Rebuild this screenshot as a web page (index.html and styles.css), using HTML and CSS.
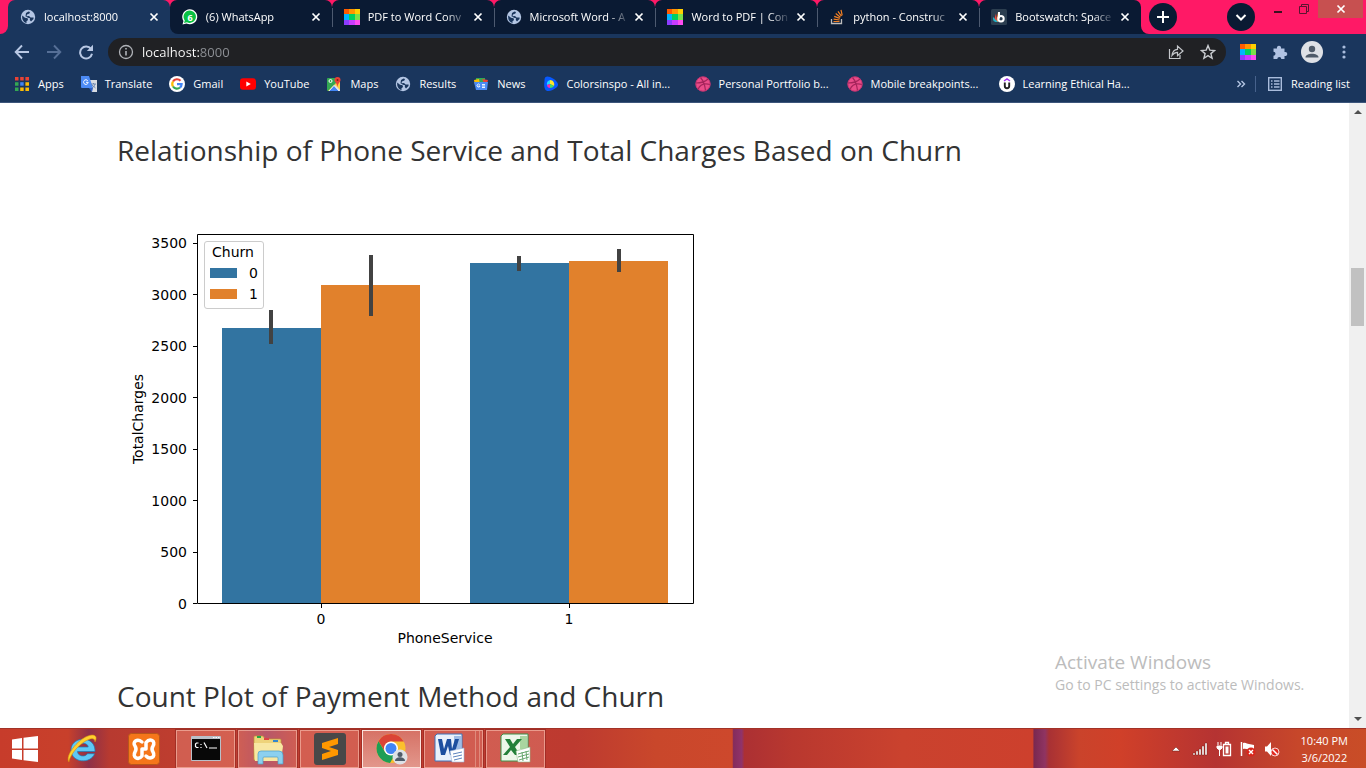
FILE: index.html
```html
<!DOCTYPE html>
<html lang="en">
<head>
<meta charset="utf-8">
<title>localhost:8000</title>
<link rel="stylesheet" href="styles.css">
</head>
<body>
<svg class="defs" aria-hidden="true">
  <symbol id="globe" viewBox="0 0 16 16"><circle cx="8" cy="8" r="7.200" fill="#b4c6e4"/><path d="M2.200 6.500 5 8.800l2.600.4.4 1.800-1.600 1.400.2 1.600C3.600 13.300 1.800 10.800 2.200 6.500zM6 4 8.500 2.500l1.500.6-.6 1.400L7 5.500l-.5 1.700L9 7l1.600 1.600 3-.1-.1 1.500-2.500 2.500-1.200-1.500.2-1.800-2-.4-2.500-1.600z" fill="#1a365d"/></symbol>
  <symbol id="rainbow" viewBox="0 0 16 16"><path fill="#ff5a00" d="M0 0h6v6H0z"/><path fill="#ff9500" d="M5 0h6v6H5z"/><path fill="#ffcf00" d="M11 0h5v6h-5z"/><path fill="#00b4ff" d="M0 5h5v6H0z"/><path fill="#00d060" d="M5 5h6v6H5z"/><path fill="#7be04a" d="M11 5h5v6h-5z"/><path fill="#8c3cff" d="M0 11h5v5H0z"/><path fill="#c93cff" d="M5 11h6v5H5z"/><path fill="#ff4cf0" d="M11 11h5v5h-5z"/></symbol>
  <symbol id="close" viewBox="0 0 16 16"><path d="m4.500 4.500 7 7m0-7-7 7" stroke="#fff" stroke-width="1.700"/></symbol>
  <symbol id="dribbble" viewBox="0 0 16 16"><circle cx="8" cy="8" r="7.500" fill="#ea4c89"/><path d="M1 7c5 0 9-1 12-4M5.500 1.500c3 3.500 4.500 8 5 13M3 13.500c2-5 6-6.500 12-5" fill="none" stroke="#a5245b" stroke-width="1.200"/><circle cx="8" cy="8" r="7.200" fill="none" stroke="#b52d68" stroke-width=".8"/></symbol>
</svg>

<header class="browser">
  <div class="tabstrip">
    <span class="edge"></span>
    <nav class="tabs" aria-label="Tabs">
      <div class="tab active"><svg class="i16"><use href="#globe"/></svg><span class="title">localhost:8000</span><button class="x" aria-label="Close tab"><svg class="i16"><use href="#close"/></svg></button></div>
      <div class="tab first"><svg class="i16" viewBox="0 0 16 16"><path d="M.5 15.500 1.500 12A7.500 7.500 0 1 1 4.500 14.600z" fill="#fff"/><path d="m2 14 .8-2.500A6.200 6.200 0 1 1 5 13.300z" fill="#09c143"/><text x="8" y="11.500" text-anchor="middle" class="badge6">6</text></svg><span class="title">(6) WhatsApp</span><button class="x" aria-label="Close tab"><svg class="i16"><use href="#close"/></svg></button></div>
      <div class="tab"><svg class="i16"><use href="#rainbow"/></svg><span class="title">PDF to Word Conv</span><button class="x" aria-label="Close tab"><svg class="i16"><use href="#close"/></svg></button></div>
      <div class="tab"><svg class="i16"><use href="#globe"/></svg><span class="title">Microsoft Word - A</span><button class="x" aria-label="Close tab"><svg class="i16"><use href="#close"/></svg></button></div>
      <div class="tab"><svg class="i16"><use href="#rainbow"/></svg><span class="title">Word to PDF | Con</span><button class="x" aria-label="Close tab"><svg class="i16"><use href="#close"/></svg></button></div>
      <div class="tab"><svg class="i16" viewBox="0 0 16 16"><path d="M2.500 10v4.500h10V10" fill="none" stroke="#bcbbbb" stroke-width="1.300"/><path d="M4.500 12.500h6M4.600 10.200l6 .8M5.200 7.400l5.600 2M6.700 4.600l4.700 3.600M9 2.300l3.400 4.800M12 .8l1.200 5.600" stroke="#f48024" stroke-width="1.200"/></svg><span class="title">python - Construc</span><button class="x" aria-label="Close tab"><svg class="i16"><use href="#close"/></svg></button></div>
      <div class="tab"><svg class="i16" viewBox="0 0 16 16"><rect width="16" height="16" rx="1.500" fill="#2c3e50"/><path d="M7 3v10H5z" fill="#f58a3c"/><path d="M5 4.500 6 13l-3-2z" fill="#e8473f"/><path d="M2 8l5 5H4.500A3 3 0 0 1 2 10z" fill="#20b2c8"/><path d="M8 3v6.500" stroke="#fff" stroke-width="2"/><circle cx="10" cy="9.700" r="2.700" fill="none" stroke="#fff" stroke-width="2"/></svg><span class="title">Bootswatch: Space</span><button class="x" aria-label="Close tab"><svg class="i16"><use href="#close"/></svg></button></div>
    </nav>
    <div class="strip-end">
      <button class="round" aria-label="New tab"><svg class="i16" viewBox="0 0 16 16"><path d="M8 2v12M2 8h12" stroke="#fff" stroke-width="2"/></svg></button>
      <button class="round search" aria-label="Search tabs"><svg class="i16" viewBox="0 0 16 16"><path d="m3.500 6 4.500 4.500L12.500 6" fill="none" stroke="#fff" stroke-width="2"/></svg></button>
      <div class="wincontrols">
        <button aria-label="Minimize"><svg width="10" height="10"><path d="M1 8h8" stroke="#3a1020" stroke-width="2"/></svg></button>
        <button aria-label="Restore"><svg width="10" height="10"><path d="M.5 2.500h7v7h-7zM2.500 2V.5h7v7H8" fill="none" stroke="#5a1530"/></svg></button>
        <button class="winclose" aria-label="Close"><svg width="10" height="10"><path d="m1.500 1.500 7 7m0-7-7 7" stroke="#fff" stroke-width="1.700"/></svg></button>
      </div>
    </div>
  </div>

  <div class="toolbar">
    <button aria-label="Back"><svg class="i16" viewBox="0 0 16 16"><path d="M15 8H2M8 1.500 1.700 8 8 14.500" fill="none" stroke="#b8c8e4" stroke-width="1.900"/></svg></button>
    <button aria-label="Forward"><svg class="i16" viewBox="0 0 16 16"><path d="M1 8h13M8 1.500 14.300 8 8 14.500" fill="none" stroke="#566f96" stroke-width="1.900"/></svg></button>
    <button aria-label="Reload"><svg class="i16" viewBox="0 0 16 16"><path d="M13 5A6 6 0 1 0 14 9.800" fill="none" stroke="#b8c8e4" stroke-width="2"/><path d="M15 .8V7H8.800z" fill="#b8c8e4"/></svg></button>
    <div class="omnibox">
      <svg class="i16" viewBox="0 0 16 16"><circle cx="8" cy="8" r="6.500" fill="none" stroke="#b0b3b8" stroke-width="1.300"/><path d="M8 7v4.500M8 4v1.600" stroke="#b0b3b8" stroke-width="1.600"/></svg>
      <input type="text" value="localhost:8000" aria-label="Address">
      <button aria-label="Share"><svg class="i16" viewBox="0 0 16 16"><path d="M1.500 5v9.500H12V11" fill="none" stroke="#c4c7cb" stroke-width="1.200"/><path d="M4 11.500C4.500 7.500 6.500 5.500 9.500 5.300V2l5.500 5-5.500 4.600V8.300C7 8.300 5.500 9.500 4 11.500z" fill="none" stroke="#c4c7cb" stroke-width="1.200"/></svg></button>
      <button aria-label="Bookmark"><svg class="i16" viewBox="0 0 16 16"><path d="m8 1.600 1.800 4.500 4.800.4-3.700 3.100 1.200 4.700L8 11.700l-4.100 2.600 1.200-4.700L1.400 6.500l4.800-.4z" fill="none" stroke="#c9ccd0" stroke-width="1.400"/></svg></button>
    </div>
    <button aria-label="Extension"><svg class="i16"><use href="#rainbow"/></svg></button>
    <button aria-label="Extensions"><svg class="i16" viewBox="0 0 16 16"><path d="M1.500 4.500H5a2.100 2.100 0 1 1 4 0h3.500V8a2.100 2.100 0 1 1 0 4v3H9.300a2 2 0 0 0-4 0H1.500v-3.300a2 2 0 0 0 0-4z" fill="#b0c2e2"/></svg></button>
    <button aria-label="Profile"><svg width="22" height="22" viewBox="0 0 22 22"><circle cx="11" cy="11" r="11" fill="#dee1e6"/><circle cx="11" cy="8" r="3.200" fill="#4f5b69"/><path d="M4.500 16.500c0-5 13-5 13 0z" fill="#4f5b69"/></svg></button>
    <button aria-label="Menu"><svg class="i16" viewBox="0 0 16 16"><g fill="#a9bcdc"><circle cx="8" cy="3" r="1.600"/><circle cx="8" cy="8" r="1.600"/><circle cx="8" cy="13" r="1.600"/></g></svg></button>
  </div>

  <nav class="bookmarks" aria-label="Bookmarks">
    <a href="#"><svg class="i16" viewBox="0 0 16 16"><path d="M1 1h3.500v3.500H1zM6.200 1h3.500v3.500H6.200zM11.400 1H15v3.500h-3.600z" fill="#ea4335"/><path d="M1 6.200h3.500v3.500H1zM1 11.400h3.500V15H1z" fill="#34a853"/><path d="M6.200 6.200h3.500v3.500H6.200z" fill="#4285f4"/><path d="M11.400 6.200H15v3.500h-3.600zM6.200 11.400h3.500V15H6.200zM11.400 11.400H15V15h-3.600z" fill="#fbbc05"/></svg>Apps</a>
    <a href="#"><svg class="i16" viewBox="0 0 16 16"><path d="M7 4h9v12h-5z" fill="#d9dce2"/><path d="M0 0h8l4 12H1q-1 0-1-1z" fill="#4c8bf5"/><path d="m8 12 3 4 1-4z" fill="#2f5fc4"/><path d="M6.800 4.800A2.300 2.300 0 1 0 7.200 6.300H5" fill="none" stroke="#fff"/><path d="M10 8h5m-2.500-1v1m1.500 0c-.5 2-1.500 3.500-3 4m0-3 3.500 3" fill="none" stroke="#5a78a8" stroke-width=".8"/></svg>Translate</a>
    <a href="#"><svg class="i16" viewBox="0 0 16 16"><circle cx="8" cy="8" r="8" fill="#fff"/><g fill="none" stroke-width="2.200"><path d="M4 5.500A4.700 4.700 0 0 1 11.500 4.800" stroke="#ea4335"/><path d="M4 5.500a4.700 4.700 0 0 0 0 5" stroke="#fbbc05"/><path d="M4 10.500a4.700 4.700 0 0 0 7 1" stroke="#34a853"/><path d="M11 11.500A4.500 4.500 0 0 0 12.600 8.200H8" stroke="#4285f4"/></g></svg>Gmail</a>
    <a href="#"><svg class="i16" viewBox="0 0 16 16"><rect y="2.300" width="16" height="11.500" rx="3" fill="#f00"/><path d="m6.300 5.500 4.500 2.500-4.500 2.500z" fill="#fff"/></svg>YouTube</a>
    <a href="#"><svg class="i16" viewBox="0 0 16 16"><rect x="1" y="2" width="13" height="13" rx="1" fill="#34a853"/><path d="M2 15 13 4l1 1v10z" fill="#fbd04a"/><path d="m9 9 5 5v1h-1L8 10z" fill="#dfe3ea"/><path d="m3 15 5-5.500 5 5.500z" fill="#4285f4"/><path d="m3 15 5-5.500 5 5.500" fill="none" stroke="#e8ecf2"/><circle cx="4.500" cy="5" r="1.500" fill="none" stroke="#fff"/><path d="M8.500 4a3 3 0 0 1 6 0c0 2-2.500 3-3 7-.5-4-3-5-3-7z" fill="#ea4335"/><circle cx="11.500" cy="4" r="1" fill="#8b1c13"/></svg>Maps</a>
    <a href="#"><svg class="i16"><use href="#globe"/></svg>Results</a>
    <a href="#"><svg class="i16" viewBox="0 0 16 16"><path d="m3 2 9 0v6H3z" fill="#34a853"/><path d="m1 4 5-1 1 5-5 1z" fill="#fbbc05"/><path d="m9 3 6 1-2 7z" fill="#ea4335"/><path d="M1 6h14l-1 8H3z" fill="#4c8bf5"/><path d="M6.700 8.600A1.500 1.500 0 1 0 7 10H5.500M9 8.500h3M9 10h3m-3 1.500h3" fill="none" stroke="#fff" stroke-width=".9"/></svg>News</a>
    <a class="long" href="#"><svg class="i16" viewBox="0 0 16 16"><path d="M1.500 4C1.500-.8 6 0 10 2.500S17 8.500 13.500 11.500 3.500 17 2 13 1.500 8 1.500 4z" fill="#0759ff"/><path d="M7 4a4 4 0 0 0-3 5l3-1z" fill="#26d9ff"/><path d="M7 4v4l4 2c1-3-1-6-4-6z" fill="#ffe62b"/><path d="M4 9c0 2 1.500 3 3 3V8z" fill="#ff28ad"/><path d="M7 8v4c2 0 3-.8 4-2z" fill="#46dc65"/></svg>Colorsinspo - All in...</a>
    <a class="long" href="#"><svg class="i16"><use href="#dribbble"/></svg>Personal Portfolio b...</a>
    <a class="long" href="#"><svg class="i16"><use href="#dribbble"/></svg>Mobile breakpoints...</a>
    <a class="long" href="#"><svg class="i16" viewBox="0 0 16 16"><circle cx="8" cy="8" r="8" fill="#fff"/><path d="m5 5 3-2 3 2" fill="none" stroke="#a435f0" stroke-width="1.500"/><path d="M5.800 6.500V10a2.200 2.200 0 0 0 4.400 0V6.500" fill="none" stroke="#222" stroke-width="1.900"/></svg>Learning Ethical Ha...</a>
    <button class="more" aria-label="More bookmarks"><svg class="i16" viewBox="0 0 16 16"><path d="m4.500 5 3 3-3 3m4-6 3 3-3 3" fill="none" stroke="#b4c6e4" stroke-width="1.400"/></svg></button>
    <a class="reading" href="#"><svg class="i16" viewBox="0 0 16 16"><rect x="1.700" y="1.700" width="12.600" height="12.600" fill="none" stroke="#a9bcdc" stroke-width="1.400"/><path d="M4 5h1.500M7 5h5.500M4 8h1.500M7 8h5.500M4 11h1.500M7 11h5.500" stroke="#a9bcdc" stroke-width="1.500"/></svg>Reading list</a>
  </nav>
</header>

<div class="viewport">
  <main>
    <h3>Relationship of Phone Service and Total Charges Based on Churn</h3>
    <svg class="chart" viewBox="0 0 640 480" role="img" aria-label="TotalCharges by PhoneService and Churn">
      <g fill="#3274a1"><path d="M105 151h99v275h-99z"/><path d="M353 86h99v340h-99z"/></g>
      <g fill="#e1812c"><path d="M204 108h99v318h-99z"/><path d="M452 84h99v342h-99z"/></g>
      <path d="M154 133v34M254 78v61M402 79v15M502 72v23" stroke="#424242" stroke-width="4"/>
      <path d="M80.500 57.500h496v369h-496zM76 426.500h4M76 375.500h4M76 323.500h4M76 272.500h4M76 220.500h4M76 169.500h4M76 117.500h4M76 66.500h4M204.500 427v4M452.500 427v4" fill="none" stroke="#000"/>
      <g text-anchor="end"><text x="70" y="432">0</text><text x="70" y="380">500</text><text x="70" y="329">1000</text><text x="70" y="277">1500</text><text x="70" y="226">2000</text><text x="70" y="174">2500</text><text x="70" y="123">3000</text><text x="70" y="71">3500</text></g>
      <g text-anchor="middle"><text x="204" y="447">0</text><text x="452" y="447">1</text><text x="328" y="466">PhoneService</text><text transform="translate(26 242) rotate(-90)">TotalCharges</text></g>
      <rect x="87.500" y="64.500" width="59" height="67" rx="2.500" fill="#fff" fill-opacity=".8" stroke="#ccc"/>
      <path d="M93 91h27v10H93z" fill="#3274a1"/><path d="M93 112h27v10H93z" fill="#e1812c"/>
      <text x="116" y="80" text-anchor="middle">Churn</text><text x="132" y="101">0</text><text x="132" y="122">1</text>
    </svg>
    <h3>Count Plot of Payment Method and Churn</h3>
  </main>
  <div class="scrollbar"><span class="up"></span><span class="thumb"></span><span class="down"></span></div>
  <aside class="watermark"><p class="big">Activate Windows</p><p>Go to PC settings to activate Windows.</p></aside>
</div>

<footer class="taskbar">
  <button class="pin start" aria-label="Start"><svg width="28" height="28" viewBox="0 0 28 28"><path d="m1 4.500 10-1.500v10.500H1zM12.500 2.800 27 1v12.500H12.500zM1 15h10v10L1 23.500zM12.500 15H27v12l-14.500-1.800z" fill="#fff"/></svg></button>
  <button class="pin" aria-label="Internet Explorer"><svg width="32" height="32" viewBox="0 0 32 32"><path d="M29 18.500H11.500c.3 5 7.500 6 10 2.200h7C25 31 5.500 30.500 5 17 5 3 29.500 1.500 29 18.500zM11.700 14h10.500c-.5-5-9.500-5-10.500 0z" fill="#5fc8f5" stroke="#1a7bb8" stroke-width=".7"/><path d="M3 29C-2 23 14 3 26 2c6 0 4 5 3 7 0-8-13 0-19 7C5 22 3 27 3 29z" fill="#ffd12e" stroke="#d58a10" stroke-width=".6"/></svg></button>
  <button class="pin" aria-label="XAMPP"><svg width="32" height="32" viewBox="0 0 32 32"><rect x=".5" y=".5" width="31" height="31" rx="3" fill="#f5761a" stroke="#b9571a"/><path d="M14 9C9 5 4 9 7 13q2 3 0 6c-3 5 3 9 7 4v-7h4V9.500C22 4.500 28 8 25 13q-2 3 0 6c3 5-3 8-7 4" fill="none" stroke="#fff" stroke-width="3.500" stroke-linecap="round" stroke-linejoin="round"/></svg></button>
  <div class="running">
    <button class="task" aria-label="Command Prompt"><svg width="30" height="26" viewBox="0 0 30 26"><rect width="30" height="25" rx="1" fill="#b9c0c8"/><path d="M1 3h28v21H1z" fill="#080808"/><path d="M22 1.500h1.500m1 0H26m1 0h1.500" stroke="#fff"/><path d="M7.500 7h-2L4.500 8v2.500l1 1h2M10 8v1m0 2v1M13 6.500l3 5.500M18 12h8" fill="none" stroke="#fff" stroke-width="1.200"/></svg></button>
    <button class="task" aria-label="File Explorer"><svg width="32" height="32" viewBox="0 0 32 32"><path d="M2 4q0-1 1-1h8l2 3h15q1 0 1 1v20H2z" fill="#eed37a" stroke="#bb9736" stroke-width=".7"/><path d="M5 3h4v2H5z" fill="#27a745"/><path d="M12 5h5v2h-5z" fill="#d44"/><path d="M21 7h5v2h-5z" fill="#38c"/><path d="M2 10h27l2 3-2 15H3z" fill="#f8e7a2"/><path d="M6 31V21q0-3 3-3h18q4 0 4 4v9h-5v-6q0-1-1-1H12q-1 0-1 1v6z" fill="#8cd0ef" stroke="#4b9dc7" stroke-width=".7"/></svg></button>
    <button class="task" aria-label="Sublime Text"><svg width="32" height="32" viewBox="0 0 32 32"><rect width="32" height="32" rx="3" fill="#484848"/><path d="m8 10 16-5v6l-9 3 9 3v5L8 27v-6l9-3-9-3z" fill="#ff9800"/></svg></button>
    <button class="task current" aria-label="Chrome"><svg width="32" height="32" viewBox="0 0 32 32"><circle cx="15" cy="15.500" r="14.500" fill="#fbc02d"/><path d="M2.500 8.200A14.500 14.500 0 0 1 27.700 8.500H15a7 7 0 0 0-6 10z" fill="#db4437"/><path d="M2.500 8.200A14.500 14.500 0 0 0 14 30l6.500-11A7 7 0 0 1 9 19z" fill="#1e9e56"/><circle cx="15" cy="15.500" r="7" fill="#fff"/><circle cx="15" cy="15.500" r="5.500" fill="#4285f4"/><circle cx="24" cy="24" r="7.500" fill="#dee1e6"/><circle cx="24" cy="21.500" r="2.500" fill="#4f5b69"/><path d="M19 28c0-5 10-5 10 0z" fill="#4f5b69"/></svg></button>
    <button class="task stack" aria-label="Word"><svg width="32" height="32" viewBox="0 0 32 32"><path d="m3 1 25 0v27H1V3z" fill="#e9f1fb" stroke="#3f73b8"/><path d="M20 3h7v13h-7z" fill="#9dbce6"/><path d="M4 6h4l2 10 3-10h4l1 10 3-10h4l-5 16h-4l-2-9-3 9H7z" fill="#1d4f9f"/><path d="m16 18 14-3v14H18z" fill="#fff" stroke="#9ab4d8" stroke-width=".6"/><path d="m19 21 9-2m-9 5 9-2m-8 5 8-2" stroke="#5c83bd"/></svg></button>
    <button class="task" aria-label="Excel"><svg width="32" height="32" viewBox="0 0 32 32"><path d="m3 1 25 0v27H1V3z" fill="#edf7ea" stroke="#3d9148"/><path d="M20 3h7v13h-7z" fill="#a9d5a0"/><path d="M5 6h5l3 5 4-5h5l-7 8 5 8h-5l-4-5-4 5H3l7-8z" fill="#23803a"/><path d="m16 18 14-4v15H18z" fill="#fff" stroke="#8dbd8c" stroke-width=".6"/><path d="m18 21 11-3m-11 6 11-3m-10 6 10-3m-7-5 1 9m3-10 1 9" stroke="#6aa870"/></svg></button>
  </div>
  <div class="tray">
    <button aria-label="Show hidden icons"><svg class="i16" viewBox="0 0 16 16"><path d="m4 10 4-4 4 4z" fill="#fff" stroke="#6b1d14" stroke-width=".5"/></svg></button>
    <button aria-label="Network"><svg class="i16" viewBox="0 0 16 16"><path d="M1 12h2v2H1zM4 10h2v4H4zM7 8h2v6H7zM10 5h2v9h-2zM13 2h2v12h-2z" fill="#fff" stroke="#64170f" stroke-width=".4"/></svg></button>
    <button aria-label="Battery"><svg class="i16" viewBox="0 0 16 16"><path d="M7.500 3.500h7v11h-7zM9.500 3V1.500h3V3" fill="none" stroke="#fff" stroke-width="1.300"/><path d="M9.500 5.500h3v7h-3z" fill="#fff"/><path d="M2 1v3m3-3v3M1 5h5v2L4.500 8.500h-2L1 7zM3.500 8v7" fill="#fff" stroke="#fff"/></svg></button>
    <button aria-label="Action Center"><svg class="i16" viewBox="0 0 16 16"><path d="M1.500 1v14" stroke="#fff" stroke-width="1.500"/><path d="M3 2c3-1 4 1 6 1l5 1v5c-4 1-7-2-11-1z" fill="#fff"/><circle cx="11" cy="11" r="4.500" fill="#d9261c"/><path d="m9 9 4 4m0-4-4 4" stroke="#fff" stroke-width="1.400"/></svg></button>
    <button aria-label="Volume"><svg class="i16" viewBox="0 0 16 16"><path d="M1 5.500h2L7 1v14l-4-4.500H1z" fill="#fff"/><circle cx="11" cy="11" r="4" fill="#e22a20" stroke="#fff" stroke-width=".8"/><path d="m8.500 8.500 5 5" stroke="#fff" stroke-width="1.500"/></svg></button>
    <div class="clock"><span>10:40 PM</span><span>3/6/2022</span></div>
  </div>
</footer>
</body>
</html>
```
FILE: styles.css
```css
* { box-sizing: border-box; }
body {
  margin: 0;
  height: 100vh;
  display: flex;
  flex-direction: column;
  overflow: hidden;
  font: 11px/16px "Open Sans", sans-serif;
  color: #fff;
  background: #fff;
}
button { border: 0; padding: 0; background: none; color: inherit; font: inherit; display: flex; align-items: center; justify-content: center; flex: none; }
a { color: inherit; text-decoration: none; }
svg { display: block; flex: none; }
.defs { position: absolute; width: 0; height: 0; }
.i16 { width: 16px; height: 16px; }

.browser { background: #1a365d; border-bottom: 1px solid #3c557b; flex: none; }

.tabstrip { display: flex; height: 34px; background: #0a1a33; }
.edge { width: 8px; flex: none; background: #1a365d; display: flex; }
.edge::before { content: ""; flex: 1; background: #ff1966; border-bottom-right-radius: 8px; }
.tabs { display: flex; flex: 0 1 1133px; min-width: 0; background: linear-gradient(#ff1966 8px, #1a365d 8px); }
.tab {
  flex: 1 1 0;
  min-width: 0;
  display: flex;
  align-items: center;
  gap: 8px;
  padding: 0 8px 0 12px;
  background: #0a1a33;
  border-radius: 7px 7px 0 0;
}
.tab.active { background: #1a365d; }
.tab.first { border-bottom-left-radius: 8px; }
.tab:nth-child(n+3) { background: linear-gradient(#4d5a70, #4d5a70) 0 8px / 1px 19px no-repeat #0a1a33; }
.title { flex: 1; min-width: 0; margin-right: -8px; overflow: hidden; white-space: nowrap; -webkit-mask-image: linear-gradient(90deg, #000 78px, transparent 100px); mask-image: linear-gradient(90deg, #000 78px, transparent 100px); }
.badge6 { font: bold 9px "Open Sans", sans-serif; fill: #fff; }
.strip-end { flex: 1; display: flex; align-items: center; padding-left: 8px; background: #ff1966; border-bottom-left-radius: 8px; }
.round { width: 28px; height: 28px; border-radius: 50%; background: #0a1a33; }
.search { margin-left: auto; }
.wincontrols { display: flex; align-self: flex-start; gap: 16px; margin: 0 3px 0 18px; }
.wincontrols button { height: 18px; }
.wincontrols .winclose { width: 45px; background: #c75050; margin-left: -7px; }

.toolbar { display: flex; align-items: center; height: 36px; padding: 0 14px; gap: 16px; }
.toolbar > button { width: 16px; }
.omnibox { flex: 1; display: flex; align-items: center; gap: 16px; height: 28px; border-radius: 14px; background: #202124; padding: 0 10px; margin: 0 -2px; }
.omnibox input {
  flex: 1;
  min-width: 0;
  margin-left: -8px;
  border: 0;
  padding: 0;
  outline: 0;
  font: 13px/20px "Open Sans", sans-serif;
  color: transparent;
  background: linear-gradient(90deg, #fff 57px, #8f9297 57px);
  -webkit-background-clip: text;
  background-clip: text;
}

.bookmarks { display: flex; align-items: center; height: 32px; padding: 0 14px 4px; gap: 17px; white-space: nowrap; }
.bookmarks a { display: flex; align-items: center; gap: 8px; }
.bookmarks .long { width: 135px; }
.more { margin-left: auto; }
.bookmarks .reading { border-left: 1px solid #47628c; padding-left: 11px; margin-left: -11px; width: 97px; }

.viewport { flex: 1; min-height: 0; display: flex; position: relative; overflow: hidden; }
main { flex: 1; padding: 30px 0 0 117px; color: #333; overflow: hidden; }
h3 { margin: 0; font-size: 28px; font-weight: 400; line-height: 34px; }
.chart { width: 640px; height: 480px; margin: 10px 0 22px; font: 14px "DejaVu Sans", sans-serif; fill: #000; }

.scrollbar { width: 17px; background: #f0f0f0; display: flex; flex-direction: column; align-items: center; padding: 7px 0; }
.up, .down { border: 4px solid transparent; }
.up { border-top: 0; border-bottom-color: #505050; }
.down { border-bottom: 0; border-top-color: #505050; margin-top: auto; }
.thumb { width: 13px; height: 58px; background: #c1c1c1; margin-top: 154px; }

.watermark { position: absolute; right: 56px; bottom: 33px; width: 255px; white-space: nowrap; color: #bcbcbc; font-size: 14px; line-height: 20px; }
.watermark p { margin: 0; }
.watermark .big { font-size: 19px; line-height: 26px; }

.taskbar {
  flex: none;
  display: flex;
  align-items: center;
  height: 40px;
  padding-left: 12px;
  border-top: 1px solid #a23227;
  background: linear-gradient(90deg, #c73c2b 0, #c8402b 5%, #8e3048 6.5%, #b73a30 8%, #c4402e 17%, #9c3450 19.5%, #c23d2e 22%, #bd3a30 42%, #c9472b 48%, #cd482c 53.6%, #842c5c 53.7%, #90336a 54.3%, #ac3033 54.5%, #b9382f 58%, #ca422e 66%, #cd402d 75.6%, #7a2850 75.7%, #8f3462 76.5%, #a83134 76.8%, #ca432b 79%, #d04029 82%, #b53332 89%, #c7472a 95%, #c94d27 100%);
}
.pin { width: 36px; height: 38px; margin-right: 26px; }
.start { width: 26px; }
.running { display: flex; gap: 3px; margin-left: -12px; }
.task { width: 59px; height: 38px; border: 1px solid rgba(255, 205, 190, .55); background: rgba(255, 180, 170, .28); outline: 1px solid rgba(110, 20, 20, .35); }
.current { background: linear-gradient(rgba(255, 215, 205, .35), rgba(255, 225, 215, .55)); border-color: #fbe3dd; }
.stack { padding-right: 8px; background: linear-gradient(#df8a7c, #df8a7c) 50px 0 / 1px 100% no-repeat, linear-gradient(#df8a7c, #df8a7c) 54px 0 / 1px 100% no-repeat, rgba(255, 180, 170, .28); }
.tray { margin-left: auto; display: flex; align-items: center; gap: 8px; padding-right: 18px; }
.clock { display: flex; flex-direction: column; align-items: center; line-height: 17px; margin-left: 13px; }
```
